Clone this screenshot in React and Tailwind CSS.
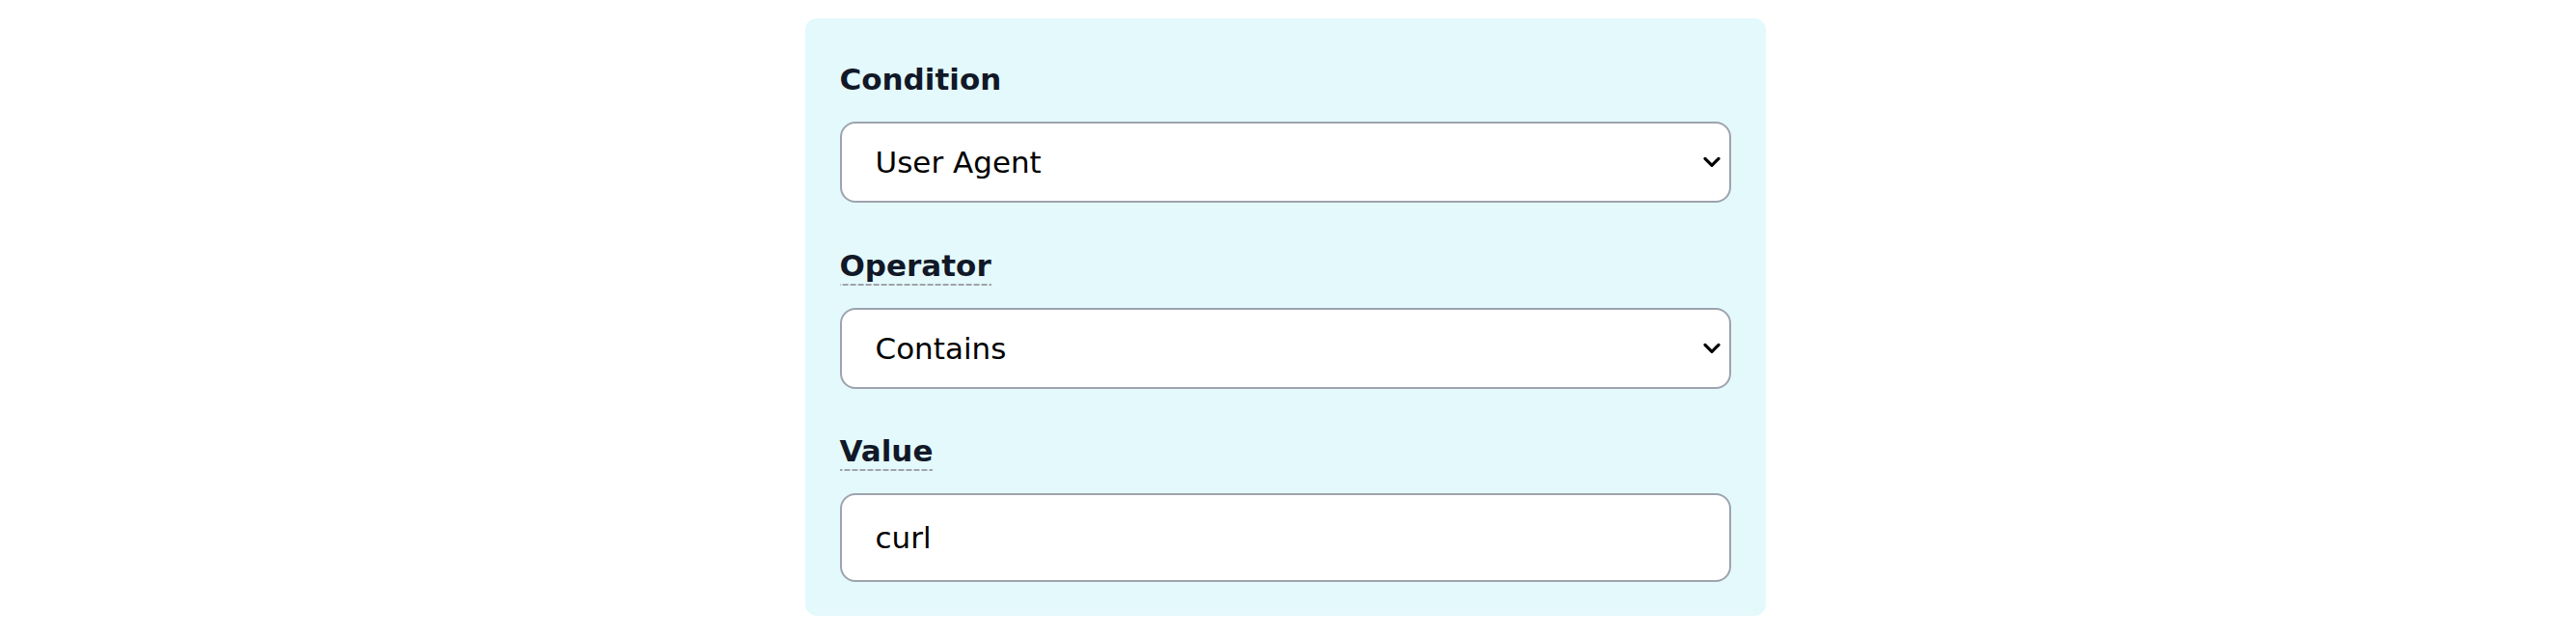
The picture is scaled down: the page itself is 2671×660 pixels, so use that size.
import React from 'react';

const Chevron = () => (
  <svg
    className="pointer-events-none absolute right-[11px] top-1/2 -translate-y-1/2"
    width="18"
    height="11"
    viewBox="0 0 18 11"
    fill="none"
  >
    <path d="M2 1.8 9 8.8l7-7" stroke="#000" strokeWidth="3.2" strokeLinecap="round" strokeLinejoin="round" />
  </svg>
);

const Label = ({ children, dashed, className = '' }) => (
  <div className={`leading-[46px] text-[31px] font-bold text-[#111827] ${className}`}>
    {dashed ? (
      <span className="bg-[linear-gradient(to_right,#a0a3ab_6px,transparent_6px)] bg-[length:8px_2px] bg-bottom bg-repeat-x pb-[3px]">
        {children}
      </span>
    ) : (
      children
    )}
  </div>
);

const SelectField = ({ value, options }) => (
  <div className="relative">
    <select
      defaultValue={value}
      className="block h-[84px] w-full appearance-none rounded-[16px] border-2 border-[#9ea3ae] bg-white pl-[35px] pr-[40px] text-[31px] text-black outline-none"
    >
      {options.map((o) => (
        <option key={o}>{o}</option>
      ))}
    </select>
    <Chevron />
  </div>
);

export default function App() {
  return (
    <div className="min-h-[660px] bg-white pt-[19px] font-['DejaVu_Sans',sans-serif]">
      <div className="flex justify-center pr-[6px]">
        <div className="w-[996px] rounded-[12px] bg-[#e3f9fb] px-[36px] pb-[35px] pt-[40px]">
          <Label className="mb-[21px]">Condition</Label>
          <SelectField value="User Agent" options={['User Agent', 'IP Address', 'Country', 'Path']} />

          <div className="mt-[42px]">
            <Label dashed className="mb-[21px]">Operator</Label>
            <SelectField value="Contains" options={['Contains', 'Equals', 'Starts with', 'Ends with']} />
          </div>

          <div className="mt-[41px]">
            <Label dashed className="mb-[21px]">Value</Label>
            <input
              type="text"
              defaultValue="curl"
              className="block h-[92px] w-full rounded-[16px] border-2 border-[#9ea3ae] bg-white px-[35px] text-[31px] text-black outline-none"
            />
          </div>
        </div>
      </div>
    </div>
  );
}
